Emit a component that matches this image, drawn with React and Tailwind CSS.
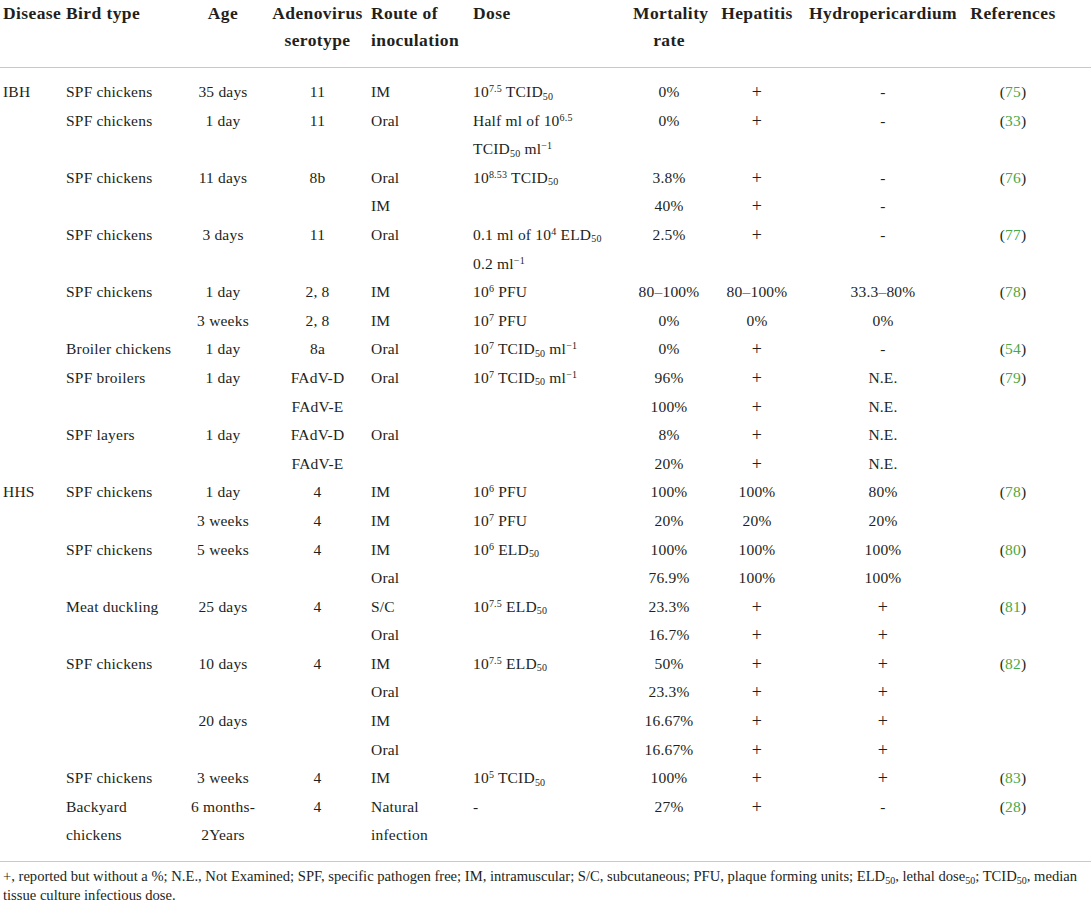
const Sup = ({ children }) => <sup className="text-[10px]">{children}</sup>;
const Sub = ({ children }) => <sub className="text-[10px]">{children}</sub>;
const Ref = ({ n }) => (
  <span>
    (<span className="text-[#47a846]">{n}</span>)
  </span>
);
const P = <span className="relative top-[1px] text-[18px] leading-none">+</span>;

const TCID = () => (
  <>
    TCID<Sub>50</Sub>
  </>
);
const ELD = () => (
  <>
    ELD<Sub>50</Sub>
  </>
);
const per = (
  <>
    {" "}ml<Sup>−1</Sup>
  </>
);

const rows = [
  ["IBH", "SPF chickens", "35 days", "11", "IM", <>10<Sup>7.5</Sup> <TCID /></>, "0%", P, "-", <Ref n="75" />],
  ["", "SPF chickens", "1 day", "11", "Oral", <>Half ml of 10<Sup>6.5</Sup><br /><TCID />{per}</>, "0%", P, "-", <Ref n="33" />],
  ["", "SPF chickens", "11 days", "8b", "Oral", <>10<Sup>8.53</Sup> <TCID /></>, "3.8%", P, "-", <Ref n="76" />],
  ["", "", "", "", "IM", "", "40%", P, "-", ""],
  ["", "SPF chickens", "3 days", "11", "Oral", <>0.1 ml of 10<Sup>4</Sup> <ELD /><br />0.2{per}</>, "2.5%", P, "-", <Ref n="77" />],
  ["", "SPF chickens", "1 day", "2, 8", "IM", <>10<Sup>6</Sup> PFU</>, "80–100%", "80–100%", "33.3–80%", <Ref n="78" />],
  ["", "", "3 weeks", "2, 8", "IM", <>10<Sup>7</Sup> PFU</>, "0%", "0%", "0%", ""],
  ["", "Broiler chickens", "1 day", "8a", "Oral", <>10<Sup>7</Sup> <TCID />{per}</>, "0%", P, "-", <Ref n="54" />],
  ["", "SPF broilers", "1 day", "FAdV-D", "Oral", <>10<Sup>7</Sup> <TCID />{per}</>, "96%", P, "N.E.", <Ref n="79" />],
  ["", "", "", "FAdV-E", "", "", "100%", P, "N.E.", ""],
  ["", "SPF layers", "1 day", "FAdV-D", "Oral", "", "8%", P, "N.E.", ""],
  ["", "", "", "FAdV-E", "", "", "20%", P, "N.E.", ""],
  ["HHS", "SPF chickens", "1 day", "4", "IM", <>10<Sup>6</Sup> PFU</>, "100%", "100%", "80%", <Ref n="78" />],
  ["", "", "3 weeks", "4", "IM", <>10<Sup>7</Sup> PFU</>, "20%", "20%", "20%", ""],
  ["", "SPF chickens", "5 weeks", "4", "IM", <>10<Sup>6</Sup> <ELD /></>, "100%", "100%", "100%", <Ref n="80" />],
  ["", "", "", "", "Oral", "", "76.9%", "100%", "100%", ""],
  ["", "Meat duckling", "25 days", "4", "S/C", <>10<Sup>7.5</Sup> <ELD /></>, "23.3%", P, P, <Ref n="81" />],
  ["", "", "", "", "Oral", "", "16.7%", P, P, ""],
  ["", "SPF chickens", "10 days", "4", "IM", <>10<Sup>7.5</Sup> <ELD /></>, "50%", P, P, <Ref n="82" />],
  ["", "", "", "", "Oral", "", "23.3%", P, P, ""],
  ["", "", "20 days", "", "IM", "", "16.67%", P, P, ""],
  ["", "", "", "", "Oral", "", "16.67%", P, P, ""],
  ["", "SPF chickens", "3 weeks", "4", "IM", <>10<Sup>5</Sup> <TCID /></>, "100%", P, P, <Ref n="83" />],
  ["", <>Backyard<br />chickens</>, <>6 months-<br />2Years</>, "4", <>Natural<br />infection</>, "-", "27%", P, "-", <Ref n="28" />],
];

const align = [
  "pl-[3px] text-left",
  "pl-[4px] text-left",
  "text-center",
  "text-center",
  "pl-[7px] text-left",
  "pl-[3px] text-left",
  "text-center",
  "text-center",
  "text-center",
  "pr-[22px] text-center",
];

const heads = [
  "Disease",
  "Bird type",
  "Age",
  <>Adenovirus<br />serotype</>,
  <>Route of<br />inoculation</>,
  "Dose",
  <>Mortality<br />rate</>,
  "Hepatitis",
  "Hydropericardium",
  "References",
];

export default function App() {
  return (
    <div className="w-[1091px] bg-white text-[#231f20] font-[family-name:'Liberation_Serif',serif]">
      <table className="w-full table-fixed border-collapse">
        <colgroup>
          <col className="w-[62px]" />
          <col className="w-[113px]" />
          <col className="w-[96px]" />
          <col className="w-[93px]" />
          <col className="w-[106px]" />
          <col className="w-[163px]" />
          <col className="w-[72px]" />
          <col className="w-[104px]" />
          <col className="w-[148px]" />
          <col className="w-[134px]" />
        </colgroup>
        <thead>
          <tr className="border-b border-[#c9c9c9]">
            {heads.map((h, i) => (
              <th key={i} className={`align-top font-bold text-[17.5px] tracking-[0.4px] leading-[27px] pb-[13px] whitespace-nowrap ${align[i]}`}>
                {h}
              </th>
            ))}
          </tr>
        </thead>
        <tbody className="text-[15.5px] tracking-[0.2px] leading-[28.6px]">
          {rows.map((r, ri) => (
            <tr key={ri}>
              {r.map((c, ci) => (
                <td key={ci} className={`align-top p-0 whitespace-nowrap ${align[ci]} ${ri === 0 ? "pt-[10px]" : ""} ${ri === rows.length - 1 ? "pb-[11px]" : ""}`}>
                  {c}
                </td>
              ))}
            </tr>
          ))}
        </tbody>
      </table>
      <div className="border-t border-[#c9c9c9] pt-[5px] pl-[3px] text-[14.6px] leading-[19px]">
        +, reported but without a %; N.E., Not Examined; SPF, specific pathogen free; IM, intramuscular; S/C, subcutaneous; PFU, plaque forming units; ELD<Sub>50</Sub>, lethal dose<Sub>50</Sub>; TCID<Sub>50</Sub>, median
        <br />
        tissue culture infectious dose.
      </div>
    </div>
  );
}
